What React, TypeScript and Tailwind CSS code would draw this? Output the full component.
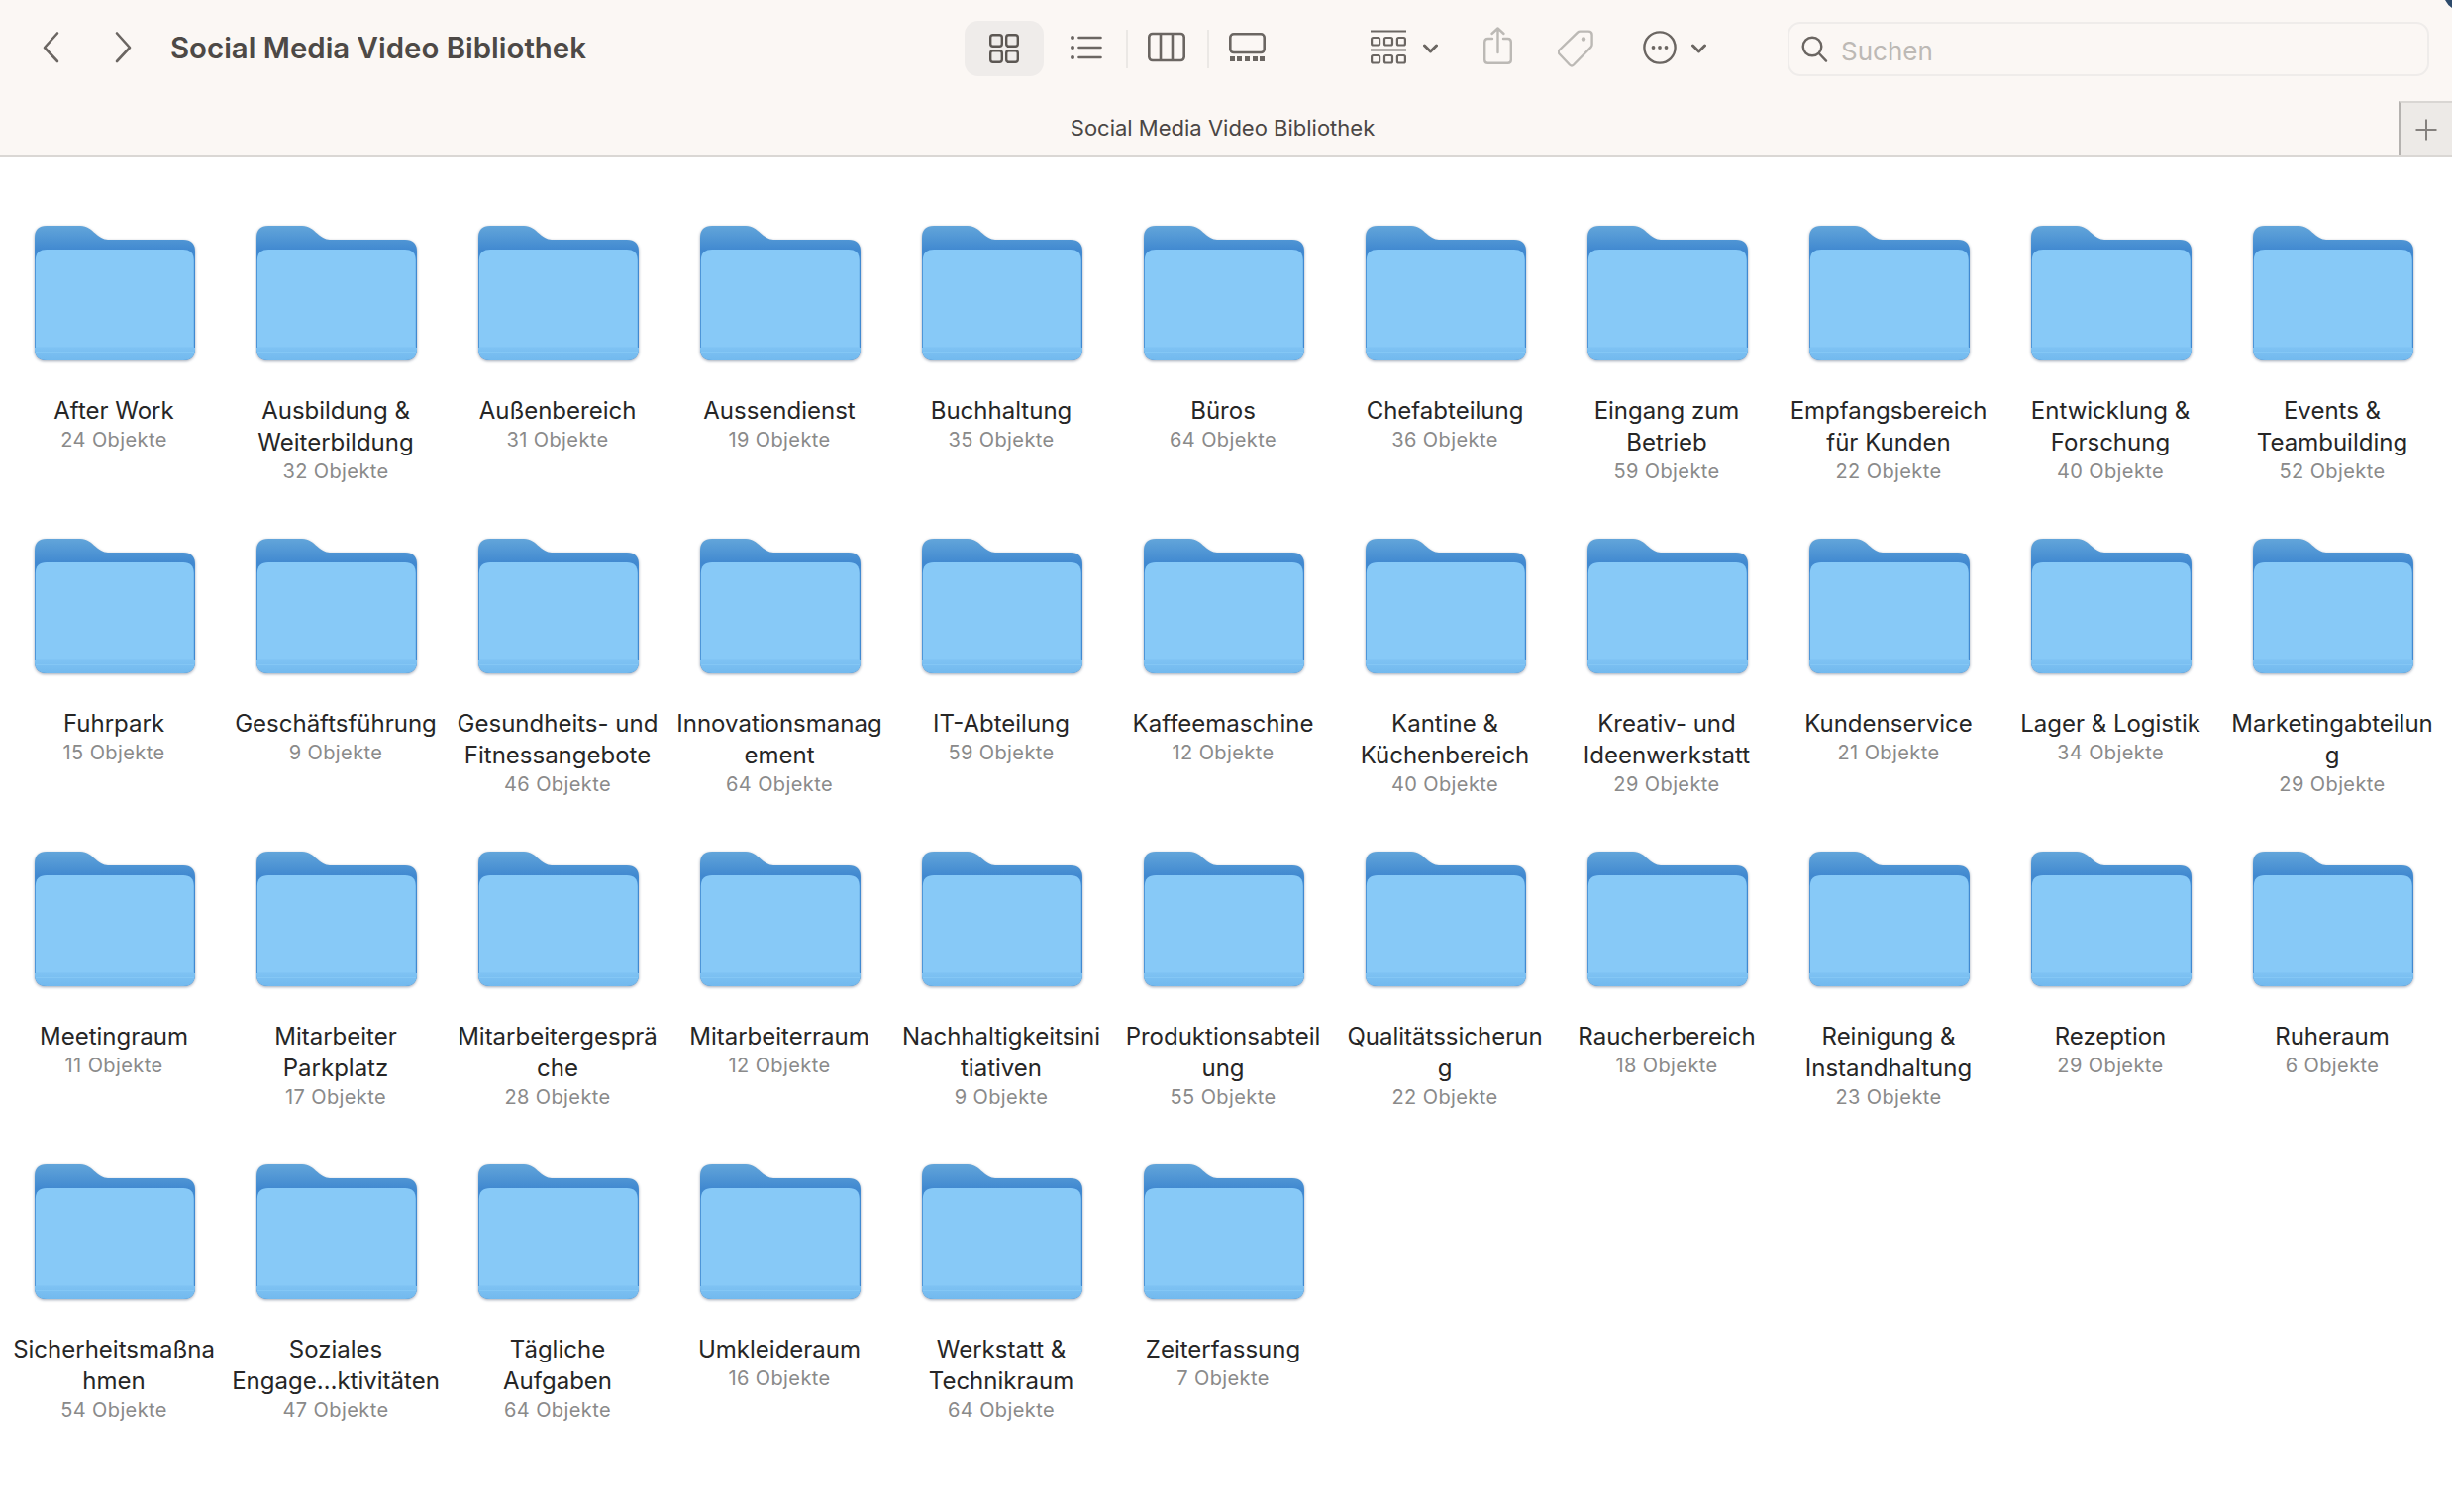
const folders = [
  { name: "After Work", count: 24 },
  { name: "Ausbildung &\nWeiterbildung", count: 32 },
  { name: "Außenbereich", count: 31 },
  { name: "Aussendienst", count: 19 },
  { name: "Buchhaltung", count: 35 },
  { name: "Büros", count: 64 },
  { name: "Chefabteilung", count: 36 },
  { name: "Eingang zum\nBetrieb", count: 59 },
  { name: "Empfangsbereich\nfür Kunden", count: 22 },
  { name: "Entwicklung &\nForschung", count: 40 },
  { name: "Events &\nTeambuilding", count: 52 },
  { name: "Fuhrpark", count: 15 },
  { name: "Geschäftsführung", count: 9 },
  { name: "Gesundheits- und\nFitnessangebote", count: 46 },
  { name: "Innovationsmanag\nement", count: 64 },
  { name: "IT-Abteilung", count: 59 },
  { name: "Kaffeemaschine", count: 12 },
  { name: "Kantine &\nKüchenbereich", count: 40 },
  { name: "Kreativ- und\nIdeenwerkstatt", count: 29 },
  { name: "Kundenservice", count: 21 },
  { name: "Lager & Logistik", count: 34 },
  { name: "Marketingabteilun\ng", count: 29 },
  { name: "Meetingraum", count: 11 },
  { name: "Mitarbeiter\nParkplatz", count: 17 },
  { name: "Mitarbeitergesprä\nche", count: 28 },
  { name: "Mitarbeiterraum", count: 12 },
  { name: "Nachhaltigkeitsini\ntiativen", count: 9 },
  { name: "Produktionsabteil\nung", count: 55 },
  { name: "Qualitätssicherun\ng", count: 22 },
  { name: "Raucherbereich", count: 18 },
  { name: "Reinigung &\nInstandhaltung", count: 23 },
  { name: "Rezeption", count: 29 },
  { name: "Ruheraum", count: 6 },
  { name: "Sicherheitsmaßna\nhmen", count: 54 },
  { name: "Soziales\nEngage…ktivitäten", count: 47 },
  { name: "Tägliche\nAufgaben", count: 64 },
  { name: "Umkleideraum", count: 16 },
  { name: "Werkstatt &\nTechnikraum", count: 64 },
  { name: "Zeiterfassung", count: 7 },
];

const iconColor = "#6b6662";
const mutedColor = "#bcb9b5";

function FolderIcon({ id }: { id: number }) {
  return (
    <svg width="162" height="140" viewBox="0 0 162 140" className="drop-shadow-[0_1.5px_1.5px_rgba(40,60,90,0.45)]">
      <defs>
        <linearGradient id={`back-${id}`} x1="0" y1="0" x2="0" y2="1">
          <stop offset="0" stopColor="#62a5da" />
          <stop offset="0.18" stopColor="#4189d0" />
          <stop offset="1" stopColor="#4189d0" />
        </linearGradient>
        <linearGradient id={`band-${id}`} x1="0" y1="0" x2="0" y2="1">
          <stop offset="0" stopColor="#7ec2f3" />
          <stop offset="1" stopColor="#72b9ee" />
        </linearGradient>
      </defs>
      <path
        d="M0 12 Q0 0 12 0 H46 C53 0 57 4 61 7.5 C65 11 69 14 74 14 H150 Q162 14 162 26 V124 Q162 136 150 136 H12 Q0 136 0 124 Z"
        fill={`url(#back-${id})`}
      />
      <path d="M0.8 35 Q0.8 24 12 24 H150 Q160.8 24 160.8 35 V123 H0.8 Z" fill="#87c9f7" />
      <path d="M0 123 H162 V124 Q162 136 150 136 H12 Q0 136 0 124 Z" fill={`url(#band-${id})`} />
      <rect x="1" y="122.5" width="160" height="1" fill="#7ec2f3" />
      <rect x="1" y="127" width="160" height="1" fill="#84c7f5" />
    </svg>
  );
}

function FolderItem({ name, count, id }: { name: string; count: number; id: number }) {
  return (
    <div className="flex flex-col items-center">
      <FolderIcon id={id} />
      <div className="mt-[31px] whitespace-pre pr-[2px] text-center text-[24px] leading-[32px] text-[#262626]">{name}</div>
      <div className="-mt-[1px] pr-[2px] text-center text-[20px] leading-[28px] tracking-[0.4px] text-[#8a8a8a]">{count} Objekte</div>
    </div>
  );
}

function Chevron({ left }: { left?: boolean }) {
  return (
    <svg width="17" height="56" viewBox="0 0 17 56" fill="none" stroke={iconColor} strokeWidth="2.6" strokeLinecap="round" strokeLinejoin="round">
      <path d={left ? "M15 12.5 L2 27 L15 41" : "M2 12.5 L15 27 L2 41"} />
    </svg>
  );
}

function SmallChevron() {
  return (
    <svg width="15" height="56" viewBox="0 0 15 56" fill="none" stroke={iconColor} strokeWidth="3" strokeLinecap="round" strokeLinejoin="round">
      <path d="M1.5 25 L7.5 31 L13.5 25" />
    </svg>
  );
}

export default function App() {
  return (
    <div className="relative min-h-[1527px] bg-white font-['Inter',sans-serif]">
      <header className="h-[159px] border-b-2 border-[#dad7d4] bg-[#fbf7f4]">
        <div className="flex h-[98px] items-center pl-[43px]">
          <Chevron left />
          <div className="ml-[56px]">
            <Chevron />
          </div>
          <h1 className="ml-[39px] w-[802px] text-[29.4px] font-semibold text-[#4d4946]">Social Media Video Bibliothek</h1>

          <div className="flex h-[56px] w-[80px] items-center justify-center rounded-[14px] bg-[#efecea]">
            <svg width="30" height="30" viewBox="0 0 30 30" fill="none" stroke="#5c5753" strokeWidth="2.4">
              <rect x="1.2" y="1.2" width="11.6" height="11.6" rx="2.5" />
              <rect x="17.2" y="1.2" width="11.6" height="11.6" rx="2.5" />
              <rect x="1.2" y="17.2" width="11.6" height="11.6" rx="2.5" />
              <rect x="17.2" y="17.2" width="11.6" height="11.6" rx="2.5" />
            </svg>
          </div>

          <svg className="ml-[27px]" width="32" height="56" viewBox="0 0 32 56" fill="none" stroke={iconColor} strokeWidth="2.6" strokeLinecap="round">
            <path d="M8.5 17 H30.5 M8.5 27 H30.5 M8.5 37 H30.5" />
            <circle cx="2" cy="17" r="2" fill={iconColor} stroke="none" />
            <circle cx="2" cy="27" r="2" fill={iconColor} stroke="none" />
            <circle cx="2" cy="37" r="2" fill={iconColor} stroke="none" />
          </svg>
          <div className="ml-[24px] h-[39px] w-[2px] bg-[#ebe8e5]" />

          <svg className="ml-[20px]" width="38" height="56" viewBox="0 0 38 56" fill="none" stroke={iconColor} strokeWidth="2.6">
            <rect x="1.3" y="13" width="35.4" height="27" rx="3.5" />
            <path d="M13 13 V40 M25 13 V40" />
          </svg>
          <div className="ml-[22px] h-[39px] w-[2px] bg-[#ebe8e5]" />

          <svg className="ml-[20px]" width="37" height="56" viewBox="0 0 37 56" fill="none">
            <rect x="1.3" y="13.3" width="34.4" height="18.7" rx="3.5" stroke={iconColor} strokeWidth="2.6" />
            <g fill={iconColor}>
              <rect x="1" y="36" width="5" height="5" />
              <rect x="8" y="36" width="5" height="5" />
              <rect x="16" y="36" width="5" height="5" />
              <rect x="24" y="36" width="5" height="5" />
              <rect x="31" y="36" width="5" height="5" />
            </g>
          </svg>

          <svg className="ml-[106px]" width="36" height="56" viewBox="0 0 36 56" fill="none" stroke={iconColor} strokeWidth="2.2">
            <path d="M0 10.5 H36 M0 29.5 H36" />
            <rect x="1.1" y="17" width="8" height="7.5" rx="1.5" />
            <rect x="14" y="17" width="8" height="7.5" rx="1.5" />
            <rect x="26.9" y="17" width="8" height="7.5" rx="1.5" />
            <rect x="1.1" y="35" width="8" height="7.5" rx="1.5" />
            <rect x="14" y="35" width="8" height="7.5" rx="1.5" />
            <rect x="26.9" y="35" width="8" height="7.5" rx="1.5" />
          </svg>
          <div className="ml-[17px]">
            <SmallChevron />
          </div>

          <svg className="ml-[46px]" width="29" height="56" viewBox="0 0 29 56" fill="none" stroke={mutedColor} strokeWidth="2.4" strokeLinecap="round" strokeLinejoin="round">
            <path d="M9 18 H4.5 Q1.2 18 1.2 21.5 V39.5 Q1.2 42.8 4.5 42.8 H24.5 Q27.8 42.8 27.8 39.5 V21.5 Q27.8 18 24.5 18 H20" />
            <path d="M14.5 32 V8 M8.5 13 L14.5 7.5 L20.5 13" />
          </svg>

          <svg className="ml-[46px]" width="36" height="56" viewBox="0 0 36 56" fill="none">
            <path
              d="M1.6 29.5 L20 11.6 Q21 10.6 22.5 10.6 H31 Q34.6 10.6 34.6 14 V24 Q34.6 25.5 33.5 26.6 L16 44.5 Q14 46.4 12 44.5 L1.6 33.5 Q-0.2 31.5 1.6 29.5 Z"
              stroke={mutedColor}
              strokeWidth="2.4"
            />
            <circle cx="26" cy="18.5" r="2.2" fill={mutedColor} />
          </svg>

          <svg className="ml-[50px]" width="34" height="56" viewBox="0 0 34 56" fill="none">
            <circle cx="17" cy="27" r="15.6" stroke={iconColor} strokeWidth="2.4" />
            <circle cx="10.5" cy="27" r="1.9" fill={iconColor} />
            <circle cx="17" cy="27" r="1.9" fill={iconColor} />
            <circle cx="23.5" cy="27" r="1.9" fill={iconColor} />
          </svg>
          <div className="ml-[15px]">
            <SmallChevron />
          </div>

          <div className="ml-[82px] flex h-[55px] w-[648px] items-center rounded-[13px] border-2 border-[#efecea] pl-[12px]">
            <svg width="27" height="27" viewBox="0 0 27 27" fill="none" stroke={iconColor} strokeWidth="2.4" strokeLinecap="round">
              <circle cx="11" cy="11" r="9.3" />
              <path d="M17.8 18 L25 25.6" />
            </svg>
            <span className="ml-[13px] pt-[4px] text-[26px] text-[#bdb9b5]">Suchen</span>
          </div>
        </div>

        <div className="flex h-[59px] items-end">
          <div className="flex h-full flex-1 items-center justify-center pt-[3px] pl-[47px] text-[22px] text-[#4a4644]">
            Social Media Video Bibliothek
          </div>
          <div className="flex h-[55px] w-[54px] items-center justify-center border-t-2 border-l-2 border-t-[#d9d6d3] border-l-[#b5b2af] bg-[#edeae7]">
            <svg width="22" height="22" viewBox="0 0 22 22" stroke="#85817e" strokeWidth="2">
              <path d="M11 0.5 V21.5 M0.5 11 H21.5" />
            </svg>
          </div>
        </div>
      </header>

      <main className="grid grid-cols-[repeat(11,224px)] auto-rows-[316px] pl-[4px] pt-[69px]">
        {folders.map((folder, index) => (
          <FolderItem key={index} id={index} name={folder.name} count={folder.count} />
        ))}
      </main>

      <svg className="absolute right-0 top-0" width="7" height="8" viewBox="0 0 7 8">
        <path d="M0 0 H7 V8 Q2.5 5 0 0 Z" fill="#2d4a6b" />
      </svg>
    </div>
  );
}
